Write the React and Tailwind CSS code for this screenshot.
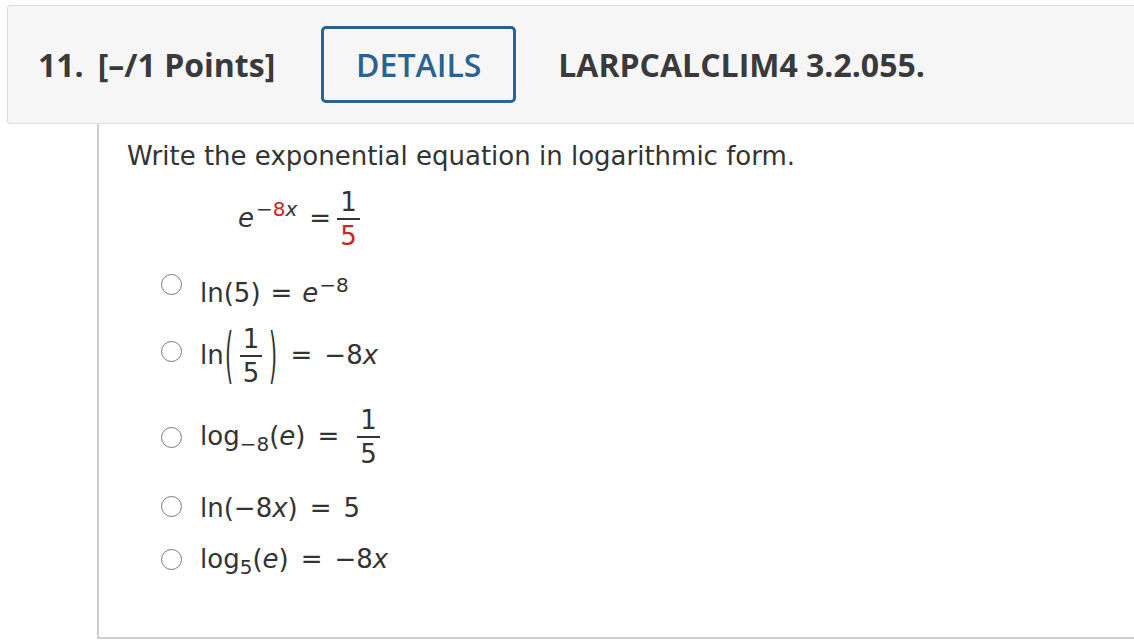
import React from "react";

const red = "text-[#c9261e]";

function Frac({ num, den, numCls = "", denCls = "" }) {
  return (
    <span className="inline-flex flex-col items-center align-middle mx-[6px]">
      <span className={"leading-[28px] px-[3px] " + numCls}>{num}</span>
      <span className="h-[2px] my-[2px] w-full bg-[#333]" />
      <span className={"leading-[28px] px-[3px] " + denCls}>{den}</span>
    </span>
  );
}

function Radio({ cls = "" }) {
  return <span className={"w-[21px] h-[21px] rounded-full border-[1.5px] border-[#777] bg-white shrink-0 " + cls} />;
}

function Option({ row, radio, children }) {
  return (
    <div className={"flex items-center gap-[18px] " + row}>
      <Radio cls={radio} />
      <div className="leading-[30px] whitespace-nowrap">{children}</div>
    </div>
  );
}

export default function App() {
  return (
    <div className="w-[1134px] h-[642px] bg-white overflow-hidden text-[#333]">
      {/* question header */}
      <div className="ml-[7px] mt-[5px] w-[1140px] h-[119px] bg-[#f6f6f6] border border-[#dcdcdc] rounded-[3px] flex items-center pl-[30px] font-['Open_Sans',sans-serif] font-bold text-[32px] text-[#3a3a3a]">
        <span>11.</span>
        <span className="ml-[14px]">[–/1 Points]</span>
        <button className="ml-[46px] w-[195px] h-[77px] border-[3px] border-[#2a6293] rounded-[5px] text-[#2a6293] font-semibold text-[32px]">
          DETAILS
        </button>
        <span className="ml-[42px]">LARPCALCLIM4 3.2.055.</span>
      </div>

      {/* question body */}
      <div className="ml-[97px] w-[1100px] h-[515px] border-l-2 border-b-2 border-[#cfcfcf] font-['DejaVu_Sans',Verdana,sans-serif] text-[26px] text-[#333]">
        <p className="pl-[28px] pt-[17px] leading-[30px]">Write the exponential equation in logarithmic form.</p>

        <div className="pl-[139px] mt-[17px] h-[62px] flex items-center">
          <div className="leading-[30px] whitespace-nowrap">
            <span className="italic">e</span>
            <span className="text-[20px] leading-[0] align-[11px] ml-[2px]">
              −<span className={red}>8</span>
              <span className="italic">x</span>
            </span>
            <span className="ml-[12px]">=</span>
            <Frac num="1" den="5" denCls={red} />
          </div>
        </div>

        <div className="pl-[62px]">
          <Option row="h-[40px] mt-[23px]" radio="mb-[18px]">
            <span>ln(5)</span>
            <span className="mx-[10px]">=</span>
            <span className="italic">e</span>
            <span className="text-[20px] leading-[0] align-[10px] ml-[1px]">−8</span>
          </Option>

          <Option row="h-[64px] mt-[11px]" radio="mb-[10px]">
            <span>ln</span>
            <span className="inline-block scale-y-[2.3] scale-x-[0.8]">(</span>
            <Frac num="1" den="5" />
            <span className="inline-block scale-y-[2.3] scale-x-[0.8]">)</span>
            <span className="mx-[12px]">=</span>
            <span>−8</span>
            <span className="italic">x</span>
          </Option>

          <Option row="h-[64px] mt-[17px]" radio="">
            <span>log</span>
            <span className="text-[20px] leading-[0] align-[-6px]">−8</span>
            <span>(</span>
            <span className="italic">e</span>
            <span>)</span>
            <span className="mx-[12px]">=</span>
            <Frac num="1" den="5" />
          </Option>

          <Option row="h-[40px] mt-[19px]" radio="mb-[4px]">
            <span>ln(−8</span>
            <span className="italic">x</span>
            <span>)</span>
            <span className="mx-[12px]">=</span>
            <span>5</span>
          </Option>

          <Option row="h-[40px] mt-[11px]" radio="">
            <span>log</span>
            <span className="text-[20px] leading-[0] align-[-6px]">5</span>
            <span>(</span>
            <span className="italic">e</span>
            <span>)</span>
            <span className="mx-[12px]">=</span>
            <span>−8</span>
            <span className="italic">x</span>
          </Option>
        </div>
      </div>
    </div>
  );
}
